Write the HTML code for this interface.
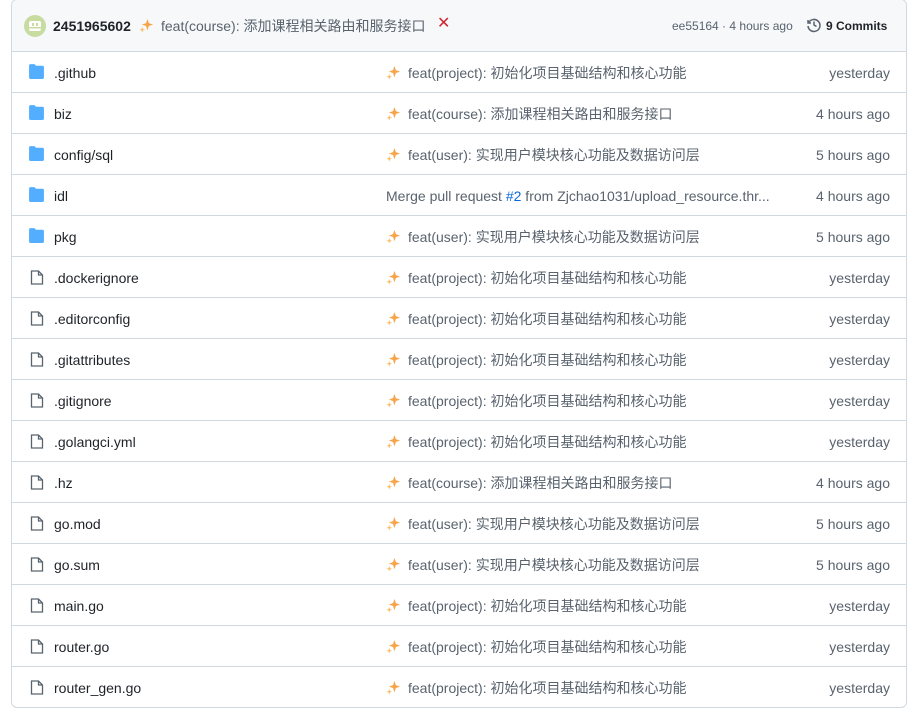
<!DOCTYPE html>
<html><head><meta charset="utf-8"><style>
body{margin:0;background:#fff;font-family:"Liberation Sans","Noto Sans CJK SC",sans-serif;font-size:14px;color:#1f2328;}
.box{position:absolute;left:11px;top:-1px;width:894px;height:707px;border:1px solid #d1d9e0;border-radius:6px;overflow:hidden;}
.hdr{height:51px;background:#f6f8fa;border-bottom:1px solid #d1d9e0;position:relative;}
.row{height:40px;border-bottom:1px solid #d1d9e0;position:relative;}
.row:last-child{border-bottom:none}
.abs{position:absolute;white-space:nowrap;line-height:16px;}
.name{left:42px;top:13px;}
.msg{left:374px;top:13px;color:#59636e;}
.date{right:16px;top:13px;color:#59636e;}
.sp{display:inline-block;vertical-align:-2px;margin-right:7px}
</style></head><body>
<div class="box">
<div class="hdr">
<svg class="abs" style="left:12px;top:15px" width="22" height="22" viewBox="0 0 22 22"><circle cx="11" cy="11" r="11" fill="#c8dba0"/><rect x="5" y="6" width="12" height="10" rx="2" fill="#fff"/><rect x="8" y="8" width="2" height="3" fill="#c8dba0"/><rect x="12" y="8" width="2" height="3" fill="#c8dba0"/><rect x="5" y="12" width="12" height="1.5" fill="#c8dba0"/></svg>
<span class="abs" style="left:41px;top:18px;font-weight:bold">2451965602</span>
<span class="abs" style="left:127px;top:18px;color:#59636e"><svg class="sp" width="15" height="15" viewBox="0 0 16 16"><path d="M9 1l1.5 4.5L15 7l-4.5 1.5L9 13l-1.5-4.5L3 7l4.5-1.5z" fill="#f7a44a"/><path d="M3.5 9.5l.8 2.2 2.2.8-2.2.8-.8 2.2-.8-2.2-2.2-.8 2.2-.8z" fill="#f9c06a"/></svg>feat(course): 添加课程相关路由和服务接口</span>
<span class="abs" style="left:425px;top:16px;color:#d1242f;font-size:16px">✕</span>
<span class="abs" style="left:660px;top:18px;color:#59636e;font-size:12px">ee55164 · 4 hours ago</span>
<svg class="abs" style="left:794px;top:17px" width="16" height="16" viewBox="0 0 16 16" fill="none" stroke="#59636e" stroke-width="1.5"><path d="M2 3v3h3"/><path d="M2.5 6A6 6 0 1 1 2 9"/><path d="M8 4.5V8l2.5 1.5"/></svg>
<span class="abs" style="left:814px;top:18px;font-weight:bold;font-size:12px">9 Commits</span>
</div>
<div id="rows"></div>
</div>
<script>
var S='<svg class="sp" width="15" height="15" viewBox="0 0 16 16"><path d="M9 1l1.5 4.5L15 7l-4.5 1.5L9 13l-1.5-4.5L3 7l4.5-1.5z" fill="#f7a44a"/><path d="M3.5 9.5l.8 2.2 2.2.8-2.2.8-.8 2.2-.8-2.2-2.2-.8 2.2-.8z" fill="#f9c06a"/></svg>';
var F='<svg class="abs" style="left:16px;top:12px" width="17" height="15" viewBox="0 0 16 14"><path d="M1 1.5A1.5 1.5 0 0 1 2.5 0h3.6l1.4 1.6h6A1.5 1.5 0 0 1 15 3.1v9.4a1.5 1.5 0 0 1-1.5 1.5h-11A1.5 1.5 0 0 1 1 12.5z" fill="#54aeff"/></svg>';
var D='<svg class="abs" style="left:18px;top:12px" width="14" height="17" viewBox="0 0 14 16" fill="none" stroke="#59636e" stroke-width="1.3"><path d="M1.5 1.5h7l4 4v9h-11z"/><path d="M8.5 1.5v4h4"/></svg>';
var P='feat(project): 初始化项目基础结构和核心功能',U='feat(user): 实现用户模块核心功能及数据访问层',C='feat(course): 添加课程相关路由和服务接口';
var r=[[1,'.github',P,'yesterday'],[1,'biz',C,'4 hours ago'],[1,'config/sql',U,'5 hours ago'],[1,'idl',null,'4 hours ago'],[1,'pkg',U,'5 hours ago'],[0,'.dockerignore',P,'yesterday'],[0,'.editorconfig',P,'yesterday'],[0,'.gitattributes',P,'yesterday'],[0,'.gitignore',P,'yesterday'],[0,'.golangci.yml',P,'yesterday'],[0,'.hz',C,'4 hours ago'],[0,'go.mod',U,'5 hours ago'],[0,'go.sum',U,'5 hours ago'],[0,'main.go',P,'yesterday'],[0,'router.go',P,'yesterday'],[0,'router_gen.go',P,'yesterday']];
var h='';r.forEach(function(x){var m=x[2]?S+x[2]:'Merge pull request <span style="color:#0969da">#2</span> from Zjchao1031/upload_resource.thr...';
h+='<div class="row">'+(x[0]?F:D)+'<span class="abs name">'+x[1]+'</span><span class="abs msg">'+m+'</span><span class="abs date">'+x[3]+'</span></div>';});
document.getElementById('rows').innerHTML=h;
</script>
</body></html>
